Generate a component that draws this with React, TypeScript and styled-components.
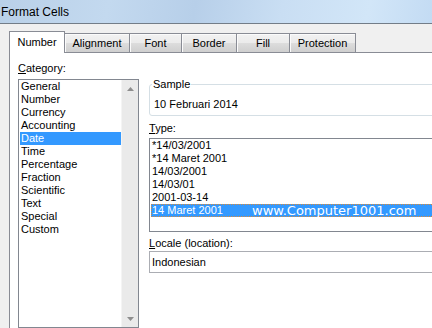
import styled, { createGlobalStyle } from 'styled-components';

const GlobalStyle = createGlobalStyle`
  html, body {
    margin: 0;
    padding: 0;
    background: #f0f0f0;
  }
  body {
    font-family: 'Liberation Sans', Arial, sans-serif;
    font-size: 11px;
    color: #000;
  }
`;

const categories = [
  'General',
  'Number',
  'Currency',
  'Accounting',
  'Date',
  'Time',
  'Percentage',
  'Fraction',
  'Scientific',
  'Text',
  'Special',
  'Custom',
];

const types = [
  '*14/03/2001',
  '*14 Maret 2001',
  '14/03/2001',
  '14/03/01',
  '2001-03-14',
  '14 Maret 2001',
];

const tabs = [
  { label: 'Number', width: 56 },
  { label: 'Alignment', width: 65 },
  { label: 'Font', width: 52 },
  { label: 'Border', width: 55 },
  { label: 'Fill', width: 53 },
  { label: 'Protection', width: 66 },
];

function Arrow({ down }: { down?: boolean }) {
  return (
    <svg width="7" height="4" viewBox="0 0 7 4">
      <polygon
        points={down ? '0,0 7,0 3.5,4' : '0,4 7,4 3.5,0'}
        fill="#8e8e8e"
      />
    </svg>
  );
}

export default function App() {
  return (
    <Window>
      <GlobalStyle />
      <TitleBar>Format Cells</TitleBar>
      <Body>
        <TabStrip>
          {tabs.map((t, i) => (
            <Tab key={t.label} $active={i === 0} $width={t.width}>
              {t.label}
            </Tab>
          ))}
        </TabStrip>
        <Panel>
          <LeftCol>
            <Label>
              <u>C</u>ategory:
            </Label>
            <CategoryBox>
              <Items>
                {categories.map((c) => (
                  <Item key={c} $selected={c === 'Date'}>
                    {c}
                  </Item>
                ))}
              </Items>
              <ScrollBar>
                <ScrollButton>
                  <Arrow />
                </ScrollButton>
                <ScrollButton>
                  <Arrow down />
                </ScrollButton>
              </ScrollBar>
            </CategoryBox>
          </LeftCol>
          <RightCol>
            <SampleGroup>
              <legend>Sample</legend>
              <SampleValue>10 Februari 2014</SampleValue>
            </SampleGroup>
            <Label $top={6}>
              <u>T</u>ype:
            </Label>
            <TypeBox>
              {types.map((t, i) => (
                <Item key={i} $selected={i === types.length - 1} $focus>
                  {t}
                  {i === types.length - 1 && (
                    <Watermark>www.Computer1001.com</Watermark>
                  )}
                </Item>
              ))}
            </TypeBox>
            <Label $top={5}>
              <u>L</u>ocale (location):
            </Label>
            <LocaleBox>Indonesian</LocaleBox>
          </RightCol>
        </Panel>
      </Body>
    </Window>
  );
}

const Window = styled.div`
  width: 432px;
  height: 328px;
  overflow: hidden;
  display: flex;
  flex-direction: column;
  background: #f0f0f0;
`;

const TitleBar = styled.div`
  flex: none;
  height: 23px;
  box-sizing: border-box;
  display: flex;
  align-items: center;
  padding-left: 1px;
  font-size: 12px;
  color: #000;
  background: linear-gradient(
    100deg,
    #b9d0e8 0%,
    #c3d9ef 25%,
    #b7cfe9 45%,
    #c9def3 65%,
    #d2e6f8 85%,
    #c3dbf3 100%
  );
  border-bottom: 1px solid #737d88;
  height: 24px;
`;

const Body = styled.div`
  flex: 1;
  display: flex;
  flex-direction: column;
  padding: 7px 0 0 9px;
`;

const TabStrip = styled.div`
  display: flex;
  align-items: flex-end;
  height: 22px;
  margin-bottom: -1px;
  position: relative;
  z-index: 1;
`;

const Tab = styled.div<{ $active?: boolean; $width: number }>`
  box-sizing: border-box;
  width: ${(p) => p.$width}px;
  height: ${(p) => (p.$active ? 22 : 19)}px;
  margin-bottom: ${(p) => (p.$active ? 0 : 1)}px;
  border: 1px solid #898c95;
  border-bottom: none;
  border-left-width: ${(p) => (p.$active ? 1 : 0)}px;
  display: flex;
  align-items: center;
  justify-content: center;
  padding-bottom: ${(p) => (p.$active ? 1 : 0)}px;
  background: ${(p) =>
    p.$active
      ? '#fff'
      : 'linear-gradient(to bottom, #f2f2f2 0%, #ebebeb 50%, #dddddd 51%, #cfcfcf 100%)'};
  box-shadow: ${(p) => (p.$active ? 'none' : 'inset 1px 1px 0 #fbfbfb')};
`;

const Panel = styled.div`
  flex: 1;
  width: 480px;
  box-sizing: border-box;
  background: #fff;
  border: 1px solid #898c95;
  display: flex;
  gap: 10px;
  padding: 9px 0 0 8px;
`;

const LeftCol = styled.div`
  flex: none;
  width: 121px;
  display: flex;
  flex-direction: column;
`;

const RightCol = styled.div`
  flex: none;
  width: 300px;
  display: flex;
  flex-direction: column;
  margin-top: 16px;
`;

const Label = styled.div<{ $top?: number }>`
  height: 13px;
  line-height: 13px;
  margin-top: ${(p) => p.$top ?? 0}px;
  margin-bottom: 4px;
  u {
    text-decoration-thickness: 1px;
    text-underline-offset: 1px;
  }
`;

const CategoryBox = styled.div`
  box-sizing: border-box;
  height: 249px;
  border: 1px solid #828790;
  display: flex;
`;

const Items = styled.div`
  flex: 1;
  display: flex;
  flex-direction: column;
`;

const Item = styled.div<{ $selected?: boolean; $focus?: boolean }>`
  position: relative;
  box-sizing: border-box;
  height: 13px;
  line-height: 13px;
  margin-left: 1px;
  padding-left: 1px;
  white-space: nowrap;
  background: ${(p) => (p.$selected ? '#3399ff' : 'transparent')};
  color: ${(p) => (p.$selected ? '#fff' : '#000')};
  outline: ${(p) => (p.$selected && p.$focus ? '1px dotted #d88a3c' : 'none')};
  outline-offset: -1px;
`;

const Watermark = styled.span`
  position: absolute;
  left: 101px;
  top: -1px;
  font-family: 'DejaVu Sans', Verdana, sans-serif;
  font-size: 13px;
  line-height: 15px;
  color: #fff;
`;

const ScrollBar = styled.div`
  flex: none;
  width: 17px;
  background: #eaeaea;
  border-left: 1px solid #f4f4f4;
  box-sizing: border-box;
  display: flex;
  flex-direction: column;
  justify-content: space-between;
`;

const ScrollButton = styled.div`
  height: 17px;
  display: flex;
  align-items: center;
  justify-content: center;
`;

const SampleGroup = styled.fieldset`
  box-sizing: border-box;
  height: 38px;
  margin: 0;
  padding: 0 0 0 2px;
  border: 1px solid #d5dfe5;
  border-radius: 3px;
  legend {
    padding: 0 1px;
    line-height: 13px;
  }
`;

const SampleValue = styled.div`
  line-height: 13px;
  margin-top: 7px;
  padding-left: 2px;
`;

const TypeBox = styled.div`
  box-sizing: border-box;
  height: 94px;
  margin-top: -1px;
  border: 1px solid #828790;
  display: flex;
  flex-direction: column;
`;

const LocaleBox = styled.div`
  box-sizing: border-box;
  height: 22px;
  margin-top: -3px;
  border: 1px solid #abadb3;
  line-height: 20px;
  padding-left: 2px;
`;
